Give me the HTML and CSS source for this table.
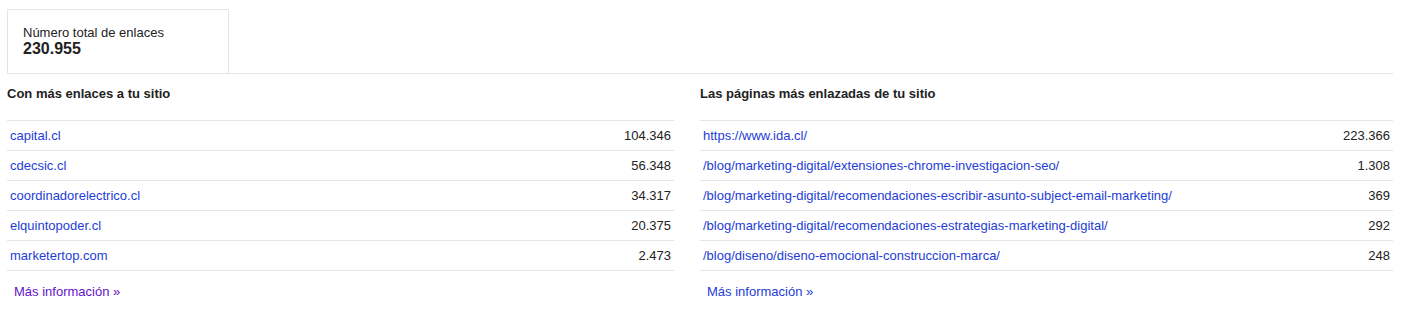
FILE: index.html
```html
<!DOCTYPE html>
<html lang="es">
<head>
<meta charset="utf-8">
<title>Enlaces a tu sitio</title>
<link rel="stylesheet" href="styles.css">
</head>
<body>
<div class="page">
  <div class="summary">
    <div class="stat">
      <div class="stat-label">Número total de enlaces</div>
      <div class="stat-value">230.955</div>
    </div>
  </div>
  <div class="columns">
    <section class="col col-left">
      <h2 class="col-title">Con más enlaces a tu sitio</h2>
      <table class="links">
        <tr><td><a href="#">capital.cl</a></td><td class="num">104.346</td></tr>
        <tr><td><a href="#">cdecsic.cl</a></td><td class="num">56.348</td></tr>
        <tr><td><a href="#">coordinadorelectrico.cl</a></td><td class="num">34.317</td></tr>
        <tr><td><a href="#">elquintopoder.cl</a></td><td class="num">20.375</td></tr>
        <tr><td><a href="#">marketertop.com</a></td><td class="num">2.473</td></tr>
      </table>
      <a class="more visited" href="#">Más información »</a>
    </section>
    <section class="col col-right">
      <h2 class="col-title">Las páginas más enlazadas de tu sitio</h2>
      <table class="links">
        <tr><td><a href="#">https://www.ida.cl/</a></td><td class="num">223.366</td></tr>
        <tr><td><a href="#">/blog/marketing-digital/extensiones-chrome-investigacion-seo/</a></td><td class="num">1.308</td></tr>
        <tr><td><a href="#">/blog/marketing-digital/recomendaciones-escribir-asunto-subject-email-marketing/</a></td><td class="num">369</td></tr>
        <tr><td><a href="#">/blog/marketing-digital/recomendaciones-estrategias-marketing-digital/</a></td><td class="num">292</td></tr>
        <tr><td><a href="#">/blog/diseno/diseno-emocional-construccion-marca/</a></td><td class="num">248</td></tr>
      </table>
      <a class="more" href="#">Más información »</a>
    </section>
  </div>
</div>
</body>
</html>
```
FILE: styles.css
```css
* { box-sizing: border-box; }
html, body { margin: 0; padding: 0; background: #fff; }
body {
  font-family: "Liberation Sans", Arial, sans-serif;
  font-size: 13px;
  color: #222;
}
.page {
  padding: 9px 0 0 7px;
  width: 1393px;
}
.summary {
  border-bottom: 1px solid #e5e5e5;
}
.stat {
  width: 222px;
  height: 64px;
  border: 1px solid #e5e5e5;
  border-bottom: none;
  padding: 15px 0 0 15px;
}
.stat-label {
  font-size: 13px;
  line-height: 15px;
  color: #222;
}
.stat-value {
  font-size: 16px;
  font-weight: bold;
  line-height: 17px;
  color: #222;
}
.columns {
  display: flex;
  gap: 26px;
}
.col-left { width: 667px; }
.col-right { width: 693px; }
.col-title {
  margin: 0;
  padding-top: 12px;
  height: 46px;
  font-size: 13px;
  font-weight: bold;
  line-height: 15px;
  color: #222;
}
.links {
  width: 100%;
  border-collapse: collapse;
  border-bottom: 1px solid #e5e5e5;
}
.links td {
  border-top: 1px solid #e5e5e5;
  height: 30px;
  padding: 0 3px;
  vertical-align: middle;
  line-height: 15px;
  white-space: nowrap;
}
.links td.num {
  text-align: right;
  color: #222;
}
a {
  color: #1e3dd6;
  text-decoration: none;
}
.more {
  display: inline-block;
  margin: 13px 0 0 7px;
  line-height: 15px;
}
.more.visited { color: #6611cc; }
```
